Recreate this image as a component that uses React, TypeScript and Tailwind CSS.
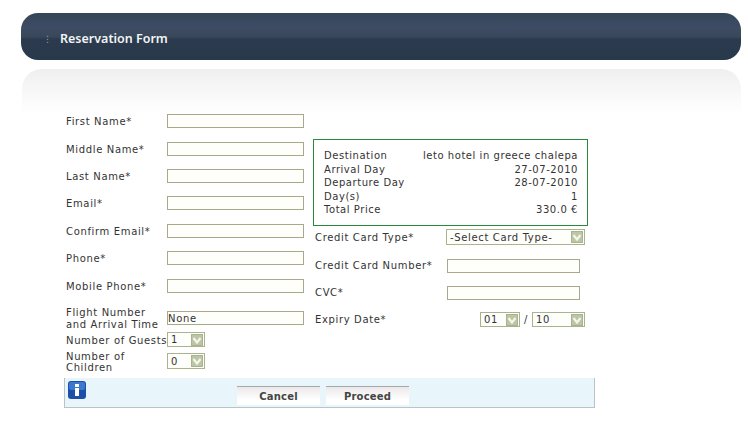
function Arrow() {
  return (
    <svg width="12" height="12" viewBox="0 0 12 12" className="shrink-0">
      <rect width="12" height="12" fill="#a9b48f" />
      <rect x="1" y="1" width="10" height="10" fill="#bcc6a6" />
      <path d="M2.5 4 L6 8.5 L9.5 4" fill="none" stroke="#f4f6ec" strokeWidth="2.2" />
    </svg>
  );
}

function Input({ value, className }: { value?: string; className: string }) {
  return (
    <div
      className={`h-[14px] border border-[#a9a88a] bg-[#fefefa] text-[10px] leading-[13px] ${className}`}
    >
      {value}
    </div>
  );
}

function Select({ value, className }: { value: string; className: string }) {
  return (
    <div
      className={`flex items-center justify-between border border-[#a9b48f] bg-[#fefefb] pl-[3px] pr-px text-[10px] ${className}`}
    >
      <span>{value}</span>
      <Arrow />
    </div>
  );
}

const textFields = [
  { label: "First Name*", height: "h-[28px]" },
  { label: "Middle Name*", height: "h-[27px]" },
  { label: "Last Name*", height: "h-[27px]" },
  { label: "Email*", height: "h-[28px]" },
  { label: "Confirm Email*", height: "h-[27px]" },
  { label: "Phone*", height: "h-[28px]" },
  { label: "Mobile Phone*", height: "h-[32px]" },
];

const summary = [
  ["Destination", "leto hotel in greece chalepa"],
  ["Arrival Day", "27-07-2010"],
  ["Departure Day", "28-07-2010"],
  ["Day(s)", "1"],
  ["Total Price", "330.0 €"],
];

export default function App() {
  return (
    <div className="h-[426px] w-[748px] overflow-hidden bg-white pl-[21px] pt-[13px] font-['DejaVu_Sans',sans-serif] text-[10px] tracking-[0.65px] text-[#333]">
      {/* title bar */}
      <div className="flex h-[47px] w-[720px] items-center rounded-[17px] bg-[linear-gradient(180deg,#364658_0%,#3d4c64_30%,#394859_50%,#2b3a4e_56%,#2a3a4c_75%,#263a4a_100%)] pt-[5px] tracking-normal">
        <span className="ml-[22px] text-[9px] leading-none text-[#8d98a3]">⋮</span>
        <h1 className="ml-[8px] font-['Noto_Sans',sans-serif] text-[12.5px] font-semibold text-[#f2f4f6]">
          Reservation Form
        </h1>
      </div>

      {/* form panel */}
      <div className="ml-px mt-[9px] h-[340px] w-[719px] rounded-t-[20px] bg-[linear-gradient(180deg,#efefef_0px,#fbfbfb_32px,#ffffff_46px)] pl-[44px] pt-[45px]">
        <div className="flex">
          <div className="w-[247px]">
            {textFields.map((field) => (
              <div key={field.label} className={`flex items-start ${field.height}`}>
                <label className="w-[101px] leading-[16px]">{field.label}</label>
                <Input className="w-[137px]" />
              </div>
            ))}
            <div className="flex h-[21px] items-start">
              <label className="mt-[-4px] w-[101px] leading-[12px]">
                Flight Number
                <br />
                and Arrival Time
              </label>
              <Input value="None" className="w-[137px]" />
            </div>
            <div className="flex h-[21px] items-start">
              <label className="w-[101px] whitespace-nowrap leading-[17px]">Number of Guests</label>
              <Select value="1" className="h-[15px] w-[38px]" />
            </div>
            <div className="flex h-[25px] items-start">
              <label className="mt-[-2px] w-[101px] leading-[11px]">
                Number of
                <br />
                Children
              </label>
              <Select value="0" className="h-[16px] w-[38px]" />
            </div>
          </div>

          <div className="w-[275px] pt-[25px]">
            <div className="h-[87px] bg-[#2a8a3c] p-px">
              <div className="h-full bg-white pl-[10px] pr-[9px] pt-[9px] leading-[13.5px] tracking-[0.55px]">
                {summary.map(([name, value]) => (
                  <div key={name} className="flex justify-between">
                    <span>{name}</span>
                    <span>{value}</span>
                  </div>
                ))}
              </div>
            </div>
            <div className="mt-[3px] flex h-[30px] items-start pl-[2px]">
              <label className="w-[131px] leading-[18px]">Credit Card Type*</label>
              <Select value="-Select Card Type-" className="h-[16px] w-[139px]" />
            </div>
            <div className="flex h-[27px] items-start pl-[2px]">
              <label className="w-[132px] leading-[14px]">Credit Card Number*</label>
              <Input className="w-[133px]" />
            </div>
            <div className="flex h-[26px] items-start pl-[2px]">
              <label className="w-[132px] leading-[14px]">CVC*</label>
              <Input className="w-[133px]" />
            </div>
            <div className="flex items-start pl-[2px]">
              <label className="w-[165px] leading-[15px]">Expiry Date*</label>
              <Select value="01" className="h-[15px] w-[40px]" />
              <span className="w-[12px] text-center leading-[15px]">/</span>
              <Select value="10" className="h-[15px] w-[53px]" />
            </div>
          </div>
        </div>

        {/* action bar */}
        <div className="relative ml-[-2px] flex h-[30px] w-[531px] items-end justify-start border-b border-r border-l border-[#b9c3c8] bg-[#e8f6fc] pb-[2px] pl-[172px]">
          <svg width="18" height="18" viewBox="0 0 18 18" className="absolute left-[3px] top-[3px]">
            <rect width="18" height="18" rx="3" fill="#1c4fa8" />
            <rect x="1" y="1" width="16" height="8" rx="2" fill="#3d78cf" />
            <rect x="7" y="3" width="4" height="3" fill="#fff" />
            <rect x="7" y="7" width="4" height="8" fill="#fff" />
          </svg>
          <button className="h-[19px] w-[83px] border-t border-[#a8a8a8] bg-[linear-gradient(180deg,#ebe8ea,#ffffff_70%)] text-[10px] font-bold tracking-[0.2px] text-[#444]">
            Cancel
          </button>
          <button className="ml-[6px] h-[19px] w-[83px] border-t border-[#a8a8a8] bg-[linear-gradient(180deg,#ebe8ea,#ffffff_70%)] text-[10px] font-bold tracking-[0.2px] text-[#444]">
            Proceed
          </button>
        </div>
      </div>
    </div>
  );
}
